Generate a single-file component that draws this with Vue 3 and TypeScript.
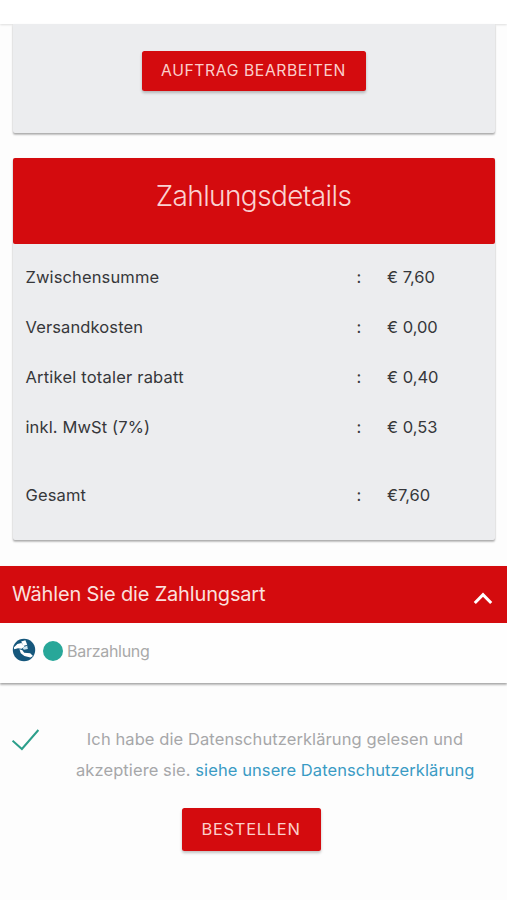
<script setup lang="ts">
import { ref } from 'vue'

interface PriceRow {
  label: string
  value: string
  kind: string
}

const rows: PriceRow[] = [
  { label: 'Zwischensumme', value: '€ 7,60', kind: 'subtotal' },
  { label: 'Versandkosten', value: '€ 0,00', kind: 'shipping' },
  { label: 'Artikel totaler rabatt', value: '€ 0,40', kind: 'discount' },
  { label: 'inkl. MwSt (7%)', value: '€ 0,53', kind: 'tax' },
  { label: 'Gesamt', value: '€7,60', kind: 'total' },
]

const open = ref(true)
const accepted = ref(true)
</script>

<template>
  <div class="page">
    <header class="topbar"></header>

    <section class="card order">
      <button class="btn edit">AUFTRAG BEARBEITEN</button>
    </section>

    <section class="card details">
      <h2 class="title"><span>Zahlungsdetails</span></h2>
      <div class="rows">
        <div v-for="row in rows" :key="row.kind" class="row" :class="row.kind">
          <span class="label">{{ row.label }}</span>
          <span class="colon">:</span>
          <span class="value">{{ row.value }}</span>
        </div>
      </div>
    </section>

    <section class="method">
      <div class="method-head" @click="open = !open">
        <span class="method-title">Wählen Sie die Zahlungsart</span>
        <svg class="chevron" viewBox="0 0 20 14">
          <path d="M1.8 12 10 3.6 18.2 12" fill="none" stroke="#fff" stroke-width="3" />
        </svg>
      </div>
      <div v-if="open" class="method-body">
        <svg class="cash" viewBox="0 0 24 24">
          <circle cx="12" cy="12" r="11.2" fill="#15577c" />
          <path d="M1.8 9.6 5.4 6 9.4 5 12.6 8.4 9.6 10.8 6 10.3 2.2 11.2z" fill="#fff" />
          <path d="M9.2 3.6 13.4 2.2 15.2 6.8 11.4 7.9z" fill="#fff" />
          <path d="M10.6 9.8 15.2 7.6 15.8 10.9 11.8 11.8z" fill="#cfe6f0" />
          <path d="M7.4 11.2 10.4 12.3 12.2 14.8 18.2 15.2 21 18 18.4 19.5 12.4 18 8.8 15.2z" fill="#fff" />
        </svg>
        <span class="radio"></span>
        <span class="method-name">Barzahlung</span>
      </div>
    </section>

    <div class="consent">
      <svg class="check" viewBox="0 0 28 22" @click="accepted = !accepted">
        <path v-if="accepted" d="M.6 11.7 9.9 20 26.4 1" fill="none" stroke="#2c9f8b" stroke-width="2" />
      </svg>
      <p class="consent-text">
        <span class="line">Ich habe die Datenschutzerklärung gelesen und</span>
        <span class="line">akzeptiere sie. <a class="link">siehe unsere Datenschutzerklärung</a></span>
      </p>
    </div>

    <button class="btn submit">BESTELLEN</button>
  </div>
</template>

<style>
body {
  margin: 0;
  background: #fdfdfd;
}
</style>

<style scoped>
.page {
  height: 900px;
  overflow: hidden;
  display: flex;
  flex-direction: column;
  font-family: Inter, "Liberation Sans", sans-serif;
  font-size: 16.5px;
  color: #36373a;
  background: #fdfdfd;
}
.topbar {
  flex: none;
  height: 24px;
  background: #fff;
  box-shadow: 0 1px 2px rgba(0, 0, 0, 0.12);
}
.card {
  flex: none;
  margin: 0 12.5px;
  background: #ecedef;
  border-radius: 2px;
  box-shadow: 0 2px 2px rgba(0, 0, 0, 0.2), 0 1px 2px rgba(0, 0, 0, 0.18);
}
.order {
  height: 108.5px;
  display: flex;
  justify-content: center;
  align-items: flex-start;
  padding-top: 27px;
  box-sizing: border-box;
  border-radius: 0 0 2px 2px;
}
.btn {
  border: 0;
  padding: 0;
  border-radius: 2.5px;
  background: #d40b0e;
  color: #fbcfcb;
  font-family: inherit;
  font-size: 15.7px;
  line-height: 20px;
  white-space: nowrap;
  box-shadow: 0 2px 3px rgba(0, 0, 0, 0.24);
}
.edit {
  width: 224px;
  height: 39.5px;
  letter-spacing: 0.6px;
}
.details {
  height: 382px;
  margin-top: 25.5px;
}
.title {
  margin: 0;
  height: 86px;
  padding-top: 18px;
  box-sizing: border-box;
  border-radius: 2px;
  background: #d40b0e;
  color: #fad2d1;
  font-size: 28px;
  line-height: 40px;
  font-weight: 300;
  text-align: center;
  letter-spacing: -0.6px;
}
.rows {
  padding-top: 7.5px;
}
.row {
  height: 50px;
  display: grid;
  grid-template-columns: 331px 30.5px 1fr;
  align-items: center;
  padding-left: 13px;
}
.label {
  letter-spacing: 0.12px;
}
.discount .label {
  letter-spacing: 0.2px;
}
.total {
  margin-top: 18px;
}
.method {
  flex: none;
  margin-top: 26px;
  background: #fefefe;
  box-shadow: 0 2px 2px rgba(0, 0, 0, 0.22), 0 1px 2px rgba(0, 0, 0, 0.18);
}
.method-head {
  height: 57px;
  display: flex;
  align-items: center;
  justify-content: space-between;
  padding: 0 14px 2px 12px;
  box-sizing: border-box;
  background: #d40b0e;
  color: #fbe0de;
  font-size: 20px;
}
.method-title {
  letter-spacing: -0.16px;
}
.chevron {
  width: 20px;
  height: 14px;
  margin-top: 8px;
}
.method-body {
  height: 59.5px;
  display: flex;
  align-items: flex-start;
  padding: 15px 0 0 12px;
  box-sizing: border-box;
}
.cash {
  width: 24px;
  height: 24px;
}
.radio {
  width: 20px;
  height: 20px;
  margin: 3px 4px 0 7px;
  border-radius: 50%;
  background: #28a799;
}
.method-name {
  margin-top: 3px;
  color: #a9a9a9;
  font-size: 16px;
  line-height: 20px;
  letter-spacing: -0.28px;
}
.consent {
  flex: none;
  display: flex;
  align-items: flex-start;
  margin-top: 41.5px;
  padding-left: 12px;
}
.check {
  flex: none;
  width: 28px;
  height: 22px;
  margin-top: 5px;
}
.consent-text {
  width: 398px;
  margin: 0 0 0 36px;
  color: #a6a7a9;
  font-size: 16.5px;
  line-height: 30.5px;
  letter-spacing: 0.09px;
  text-align: center;
}
.line {
  display: block;
  white-space: nowrap;
}
.link {
  color: #3a9bc4;
}
.submit {
  flex: none;
  align-self: center;
  width: 139px;
  height: 43.5px;
  margin: 22.5px 5px 0 0;
  font-size: 16.5px;
  letter-spacing: 0.7px;
}
</style>
